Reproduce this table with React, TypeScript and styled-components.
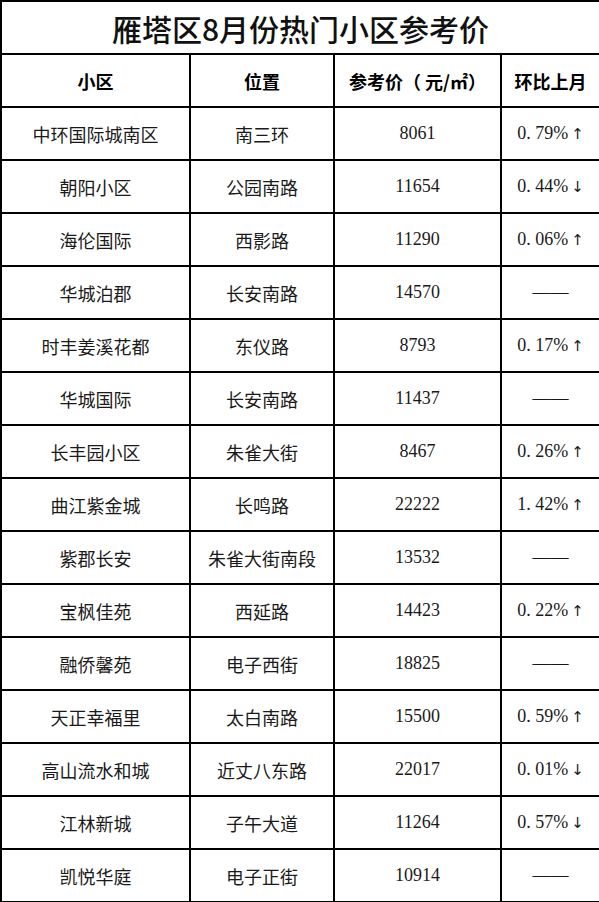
import styled, { createGlobalStyle } from 'styled-components';

const Global = createGlobalStyle`
  html, body { margin: 0; padding: 0; background: #fff; }
  body { font-family: "Liberation Serif", "Noto Sans CJK SC", serif; color: #000; }
`;

const Table = styled.table`
  width: 599px;
  border-collapse: collapse;
  table-layout: fixed;
  td, th { border: 2px solid #000; padding: 0; text-align: center; vertical-align: middle; }
`;

const TitleCell = styled.th`
  height: 51px;
  font-size: 30px;
  font-weight: 500;
  font-family: "Noto Sans CJK SC", sans-serif;
  color: #111;
`;

const HeadCell = styled.th`
  height: 51px;
  font-size: 18px;
  font-weight: 700;
  font-family: "Noto Sans CJK SC", sans-serif;
`;

const Cell = styled.td<{ $num?: boolean }>`
  height: 51px;
  font-size: 18px;
  font-family: ${({ $num }) => $num ? '"Liberation Serif", "Noto Sans CJK SC", serif' : '"Noto Sans CJK SC", sans-serif'};
  font-weight: 400;
  color: #1a1a1a;
`;

const Arrow = styled.span`
  font-family: "DejaVu Sans", sans-serif;
  font-size: 15px;
  margin-left: 3px;
`;

type Row = [string, string, string, string | null, ('up' | 'down')?];

const rows: Row[] = [
  ['中环国际城南区', '南三环', '8061', '0. 79%', 'up'],
  ['朝阳小区', '公园南路', '11654', '0. 44%', 'down'],
  ['海伦国际', '西影路', '11290', '0. 06%', 'up'],
  ['华城泊郡', '长安南路', '14570', null],
  ['时丰姜溪花都', '东仪路', '8793', '0. 17%', 'up'],
  ['华城国际', '长安南路', '11437', null],
  ['长丰园小区', '朱雀大街', '8467', '0. 26%', 'up'],
  ['曲江紫金城', '长鸣路', '22222', '1. 42%', 'up'],
  ['紫郡长安', '朱雀大街南段', '13532', null],
  ['宝枫佳苑', '西延路', '14423', '0. 22%', 'up'],
  ['融侨馨苑', '电子西街', '18825', null],
  ['天正幸福里', '太白南路', '15500', '0. 59%', 'up'],
  ['高山流水和城', '近丈八东路', '22017', '0. 01%', 'down'],
  ['江林新城', '子午大道', '11264', '0. 57%', 'down'],
  ['凯悦华庭', '电子正街', '10914', null],
];

export default function App() {
  return (
    <>
      <Global />
      <Table>
        <colgroup>
          <col style={{ width: 189 }} />
          <col style={{ width: 144 }} />
          <col style={{ width: 167 }} />
          <col style={{ width: 99 }} />
        </colgroup>
        <thead>
          <tr><TitleCell colSpan={4}>雁塔区8月份热门小区参考价</TitleCell></tr>
          <tr>
            <HeadCell>小区</HeadCell>
            <HeadCell>位置</HeadCell>
            <HeadCell>参考价（ 元/㎡）</HeadCell>
            <HeadCell>环比上月</HeadCell>
          </tr>
        </thead>
        <tbody>
          {rows.map(([name, loc, price, pct, dir]) => (
            <tr key={name}>
              <Cell>{name}</Cell>
              <Cell>{loc}</Cell>
              <Cell $num>{price}</Cell>
              <Cell $num>
                {pct ? <>{pct}<Arrow>{dir === 'up' ? '↑' : '↓'}</Arrow></> : '——'}
              </Cell>
            </tr>
          ))}
        </tbody>
      </Table>
    </>
  );
}
